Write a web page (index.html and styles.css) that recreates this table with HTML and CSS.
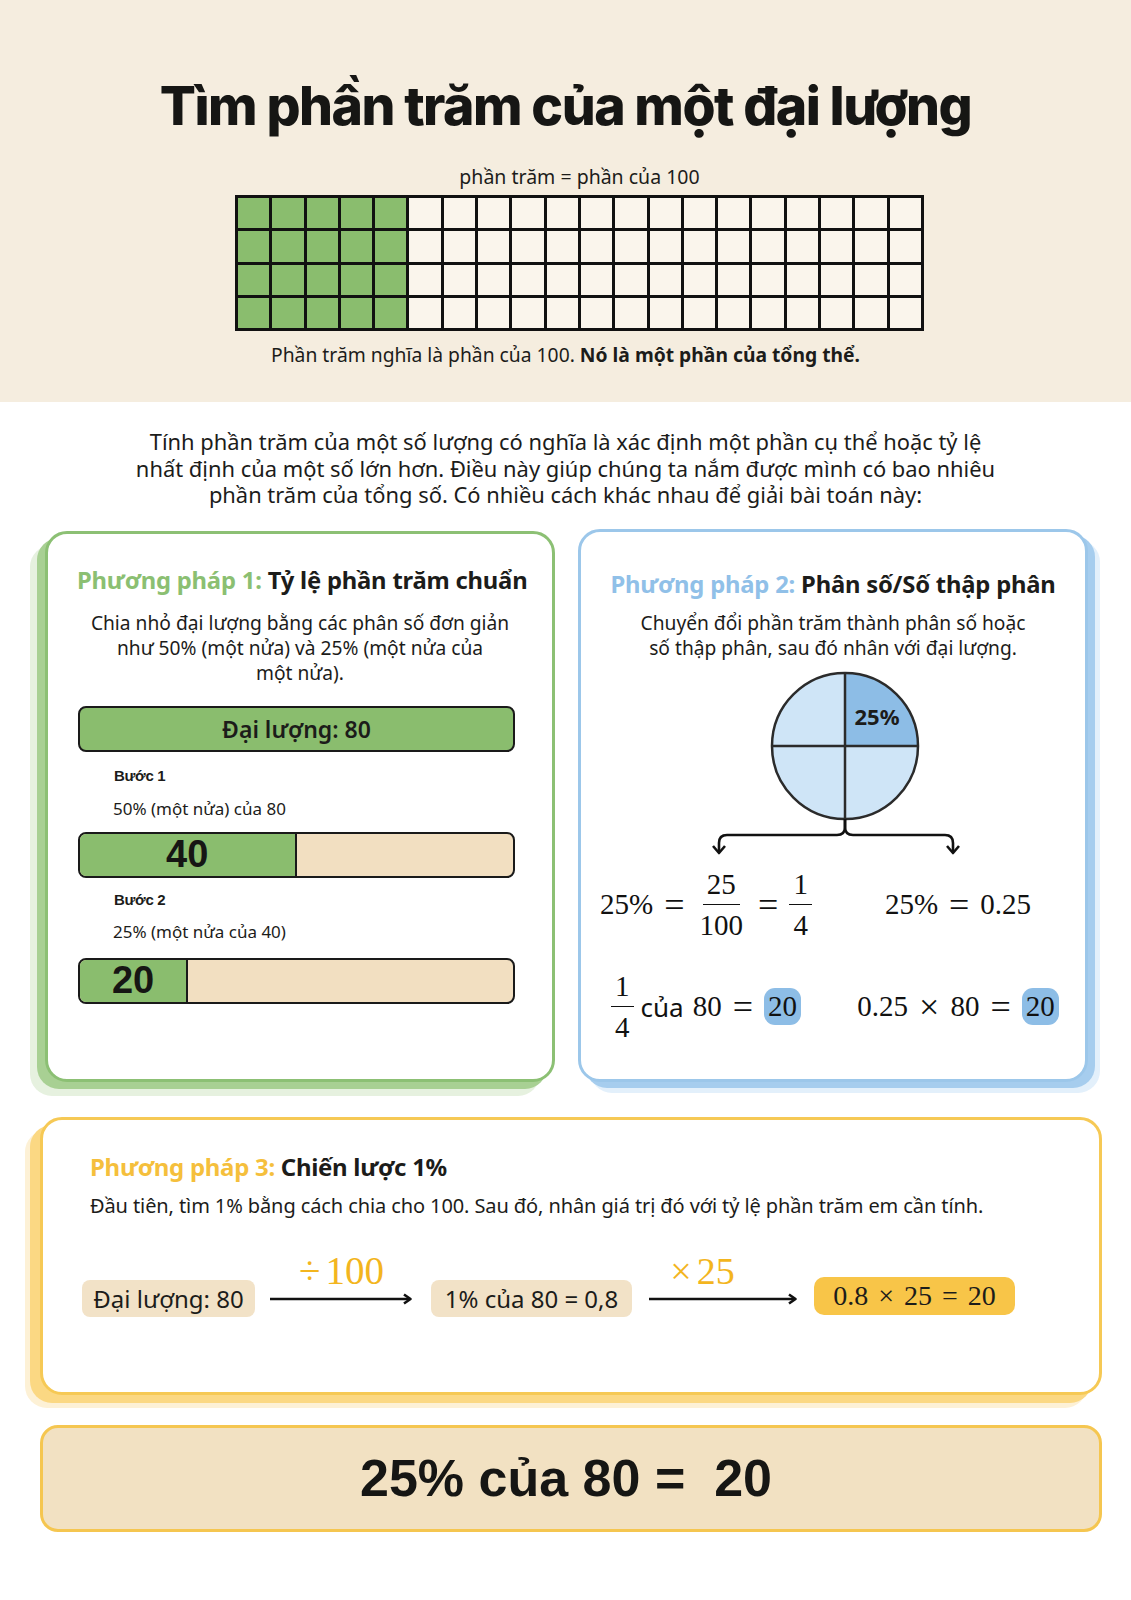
FILE: index.html
```html
<!DOCTYPE html>
<html lang="vi">
<head>
<meta charset="utf-8">
<title>Tìm phần trăm của một đại lượng</title>
<link rel="stylesheet" href="styles.css">
</head>
<body>
<header class="hero">
  <h1 class="title">Tìm phần trăm của một đại lượng</h1>
  <p class="hero-sub">phần trăm = phần của 100</p>
  <div class="grid100">
    <div class="cell on"></div><div class="cell on"></div><div class="cell on"></div><div class="cell on"></div><div class="cell on"></div>
    <div class="cell"></div><div class="cell"></div><div class="cell"></div><div class="cell"></div><div class="cell"></div><div class="cell"></div><div class="cell"></div><div class="cell"></div><div class="cell"></div><div class="cell"></div><div class="cell"></div><div class="cell"></div><div class="cell"></div><div class="cell"></div><div class="cell"></div>
    <div class="cell on"></div><div class="cell on"></div><div class="cell on"></div><div class="cell on"></div><div class="cell on"></div>
    <div class="cell"></div><div class="cell"></div><div class="cell"></div><div class="cell"></div><div class="cell"></div><div class="cell"></div><div class="cell"></div><div class="cell"></div><div class="cell"></div><div class="cell"></div><div class="cell"></div><div class="cell"></div><div class="cell"></div><div class="cell"></div><div class="cell"></div>
    <div class="cell on"></div><div class="cell on"></div><div class="cell on"></div><div class="cell on"></div><div class="cell on"></div>
    <div class="cell"></div><div class="cell"></div><div class="cell"></div><div class="cell"></div><div class="cell"></div><div class="cell"></div><div class="cell"></div><div class="cell"></div><div class="cell"></div><div class="cell"></div><div class="cell"></div><div class="cell"></div><div class="cell"></div><div class="cell"></div><div class="cell"></div>
    <div class="cell on"></div><div class="cell on"></div><div class="cell on"></div><div class="cell on"></div><div class="cell on"></div>
    <div class="cell"></div><div class="cell"></div><div class="cell"></div><div class="cell"></div><div class="cell"></div><div class="cell"></div><div class="cell"></div><div class="cell"></div><div class="cell"></div><div class="cell"></div><div class="cell"></div><div class="cell"></div><div class="cell"></div><div class="cell"></div><div class="cell"></div>
  </div>
  <p class="hero-caption">Phần trăm nghĩa là phần của 100. <b>Nó là một phần của tổng thể.</b></p>
</header>

<main class="content">
  <p class="intro">Tính phần trăm của một số lượng có nghĩa là xác định một phần cụ thể hoặc tỷ lệ<br>nhất định của một số lớn hơn. Điều này giúp chúng ta nắm được mình có bao nhiêu<br>phần trăm của tổng số. Có nhiều cách khác nhau để giải bài toán này:</p>

  <div class="methods">
    <section class="card card-green">
      <h2 class="card-title"><span class="lead green">Phương pháp 1:</span> Tỷ lệ phần trăm chuẩn</h2>
      <p class="card-desc">Chia nhỏ đại lượng bằng các phân số đơn giản<br>như 50% (một nửa) và 25% (một nửa của<br>một nửa).</p>
      <div class="bar bar-full">Đại lượng: 80</div>
      <p class="step">Bước 1</p>
      <p class="step-text">50% (một nửa) của 80</p>
      <div class="bar bar-split">
        <div class="bar-fill" style="width: 50%">40</div>
      </div>
      <p class="step step-2">Bước 2</p>
      <p class="step-text">25% (một nửa của 40)</p>
      <div class="bar bar-split last">
        <div class="bar-fill" style="width: 25%">20</div>
      </div>
    </section>

    <section class="card card-blue">
      <h2 class="card-title"><span class="lead blue">Phương pháp 2:</span> Phân số/Số thập phân</h2>
      <p class="card-desc">Chuyển đổi phần trăm thành phân số hoặc<br>số thập phân, sau đó nhân với đại lượng.</p>
      <svg class="pie" width="504" height="190" viewBox="0 0 504 190">
        <circle cx="264" cy="76" r="73" fill="#cfe5f7"/>
        <path d="M264 76 V3 A73 73 0 0 1 337 76 Z" fill="#8dbde6"/>
        <circle cx="264" cy="76" r="73" fill="none" stroke="#2b2b2b" stroke-width="2.5"/>
        <line x1="264" y1="3" x2="264" y2="149" stroke="#2b2b2b" stroke-width="2.5"/>
        <line x1="191" y1="76" x2="337" y2="76" stroke="#2b2b2b" stroke-width="2.5"/>
        <text x="296" y="55" text-anchor="middle" class="pie-label">25%</text>
        <path d="M264 149 V157 Q264 165 256 165 H146 Q138 165 138 173 V182" fill="none" stroke="#111" stroke-width="2.6"/>
        <path d="M264 149 V157 Q264 165 272 165 H364 Q372 165 372 173 V182" fill="none" stroke="#111" stroke-width="2.6"/>
        <path d="M132 176 L138 183 L144 176" fill="none" stroke="#111" stroke-width="2.6" stroke-linejoin="round"/>
        <path d="M366 176 L372 183 L378 176" fill="none" stroke="#111" stroke-width="2.6" stroke-linejoin="round"/>
      </svg>
      <div class="math-grid">
        <div class="math">
          <span>25%</span><span class="op">=</span>
          <span class="frac"><span class="num">25</span><span class="den">100</span></span>
          <span class="op">=</span>
          <span class="frac"><span class="num">1</span><span class="den">4</span></span>
        </div>
        <div class="math"><span>25%</span><span class="op">=</span><span>0.25</span></div>
        <div class="math">
          <span class="frac"><span class="num">1</span><span class="den">4</span></span>
          <span class="word">của</span><span>80</span><span class="op">=</span><span class="hl">20</span>
        </div>
        <div class="math"><span>0.25</span><span class="op">×</span><span>80</span><span class="op">=</span><span class="hl">20</span></div>
      </div>
    </section>
  </div>

  <section class="card card-yellow">
    <h2 class="card-title small"><span class="lead yellow">Phương pháp 3:</span> Chiến lược 1%</h2>
    <p class="card-desc left">Đầu tiên, tìm 1% bằng cách chia cho 100. Sau đó, nhân giá trị đó với tỷ lệ phần trăm em cần tính.</p>
    <div class="flow">
      <span class="pill p1">Đại lượng: 80</span>
      <div class="step-arrow a1">
        <span class="arrow-label"><span class="sym">÷</span>100</span>
        <svg width="143" height="12" viewBox="0 0 143 12"><path d="M0 6 H140" stroke="#111" stroke-width="2.6"/><path d="M134 1.5 L140.5 6 L134 10.5" fill="none" stroke="#111" stroke-width="2.6" stroke-linejoin="round"/></svg>
      </div>
      <span class="pill p2">1% của 80 = 0,8</span>
      <div class="step-arrow a2">
        <span class="arrow-label"><span class="sym">×</span>25</span>
        <svg width="149" height="12" viewBox="0 0 149 12"><path d="M0 6 H146" stroke="#111" stroke-width="2.6"/><path d="M140 1.5 L146.5 6 L140 10.5" fill="none" stroke="#111" stroke-width="2.6" stroke-linejoin="round"/></svg>
      </div>
      <span class="pill pill-yellow">0.8<span class="op">×</span>25<span class="op">=</span>20</span>
    </div>
  </section>

  <div class="result">25% của 80 =&nbsp; 20</div>
</main>
</body>
</html>
```
FILE: styles.css
```css
* { box-sizing: border-box; }

html, body { margin: 0; padding: 0; }

body {
  width: 1131px;
  min-height: 1600px;
  background: #ffffff;
  color: #1c1c1a;
  font-family: "Noto Sans", "Open Sans", sans-serif;
}

p, h1, h2 { margin: 0; }

/* ---------- header ---------- */
.hero {
  height: 402px;
  background: #f5eddf;
  display: flex;
  flex-direction: column;
  align-items: center;
  padding-top: 78px;
}

.title {
  font-family: "Inter", "Liberation Sans", sans-serif;
  font-weight: 800;
  font-size: 53.5px;
  line-height: 55px;
  letter-spacing: -1.5px;
  color: #161614;
}

.hero-sub {
  margin-top: 32px;
  margin-left: 28px;
  font-size: 19.5px;
  line-height: 23px;
}

.grid100 {
  margin-top: 7px;
  margin-left: 28px;
  width: 689px;
  height: 136px;
  display: grid;
  grid-template-columns: repeat(20, 1fr);
  grid-template-rows: repeat(4, 1fr);
  gap: 3px;
  padding: 3px;
  background: #111;
}

.cell { background: #faf5ec; }
.cell.on { background: #8abd6e; }

.hero-caption {
  margin-top: 12px;
  font-size: 19.3px;
  line-height: 23px;
}
.hero-caption b { font-weight: 700; }

/* ---------- content ---------- */
.content {
  display: flex;
  flex-direction: column;
}

.intro {
  margin-top: 27px;
  text-align: center;
  font-size: 21.9px;
  line-height: 26.5px;
}

.methods {
  margin-top: 22px;
  display: flex;
  align-items: flex-start;
  gap: 23px;
  padding-left: 45px;
}

.card {
  position: relative;
  background: #fff;
  border: 3px solid;
  border-radius: 22px;
}

.card-green {
  width: 510px;
  height: 551px;
  border-color: #8cc074;
  box-shadow: -8px 7px 0 #a8d093, -15px 14px 0 #e6f1df;
  padding: 32px 29px 0 29px;
}

.card-blue {
  width: 510px;
  height: 553px;
  margin-top: -2px;
  border-color: #9cc7ea;
  box-shadow: 7px 6px 0 #a6cdee, 12px 11px 0 #e3f0fb;
  padding: 38px 0 0 0;
}

.card-yellow {
  margin: 35px 29px 0 40px;
  height: 278px;
  border-color: #f6c955;
  box-shadow: -10px 8px 0 #fbd883, -15px 13px 0 #fdf1d6;
  padding: 33px 40px 0 47px;
}

.card-title {
  font-size: 23.8px;
  line-height: 28px;
  font-weight: 700;
  text-align: center;
  white-space: nowrap;
  letter-spacing: -0.2px;
}
.card-title.small {
  text-align: left;
  font-size: 24px;
  letter-spacing: -0.3px;
}

.lead.green { color: #8bbf72; }
.lead.blue { color: #90c0e8; }
.lead.yellow { color: #f5bf3c; }

.card-desc {
  margin-top: 16px;
  text-align: center;
  font-size: 19.2px;
  line-height: 25px;
}
.card-blue .card-desc { margin-top: 12px; }
.card-desc.left {
  text-align: left;
  margin-top: 13px;
  font-size: 20px;
  line-height: 24px;
  letter-spacing: -0.1px;
  white-space: nowrap;
}

/* bars */
.bar {
  height: 46px;
  margin-left: 1px;
  margin-right: 8px;
  border: 2px solid #1a1a1a;
  border-radius: 8px;
  overflow: hidden;
}

.bar-full {
  margin-top: 21px;
  background: #8abd6e;
  display: flex;
  align-items: center;
  justify-content: center;
  font-weight: 600;
  font-size: 23px;
}

.bar-split {
  margin-top: 13px;
  background: #f2dfc1;
  display: flex;
}
.bar-split.last { margin-top: 16px; }

.bar-fill {
  height: 100%;
  background: #8abd6e;
  border-right: 2px solid #1a1a1a;
  display: flex;
  align-items: center;
  justify-content: center;
  font-family: "Liberation Sans", "Arial", sans-serif;
  font-weight: 700;
  font-size: 38px;
  color: #161614;
}

.step {
  margin-top: 14px;
  margin-left: 37px;
  font-family: "Liberation Sans", sans-serif;
  font-weight: 700;
  font-size: 15px;
  line-height: 20px;
  letter-spacing: -0.3px;
}
.step.step-2 { margin-top: 12px; }

.step-text {
  margin-top: 13px;
  margin-left: 36px;
  font-size: 17px;
  line-height: 20px;
}
.step-2 + .step-text { margin-top: 12px; }

/* pie */
.pie {
  display: block;
  margin-top: 10px;
}

.pie-label {
  font-family: "Noto Sans", sans-serif;
  font-weight: 700;
  font-size: 22px;
  fill: #1c1c1a;
}

/* math */
.math-grid {
  margin-top: 6px;
  display: grid;
  grid-template-columns: 250px 254px;
  grid-template-rows: 78px 78px;
  row-gap: 24px;
}

.math {
  display: flex;
  align-items: center;
  justify-content: center;
  font-family: "Liberation Serif", "DejaVu Serif", serif;
  font-size: 29px;
  color: #111;
}

.math .op { margin: 0 11px; font-size: 36px; line-height: 34px; }

.frac {
  display: inline-flex;
  flex-direction: column;
  align-items: center;
  line-height: 34px;
}
.frac .num {
  padding: 0 4px 3px;
  border-bottom: 1.6px solid #111;
}
.frac .den { padding: 3px 4px 0; }
.frac .num, .frac .den { min-width: 22px; text-align: center; }
.math:first-child .frac:nth-of-type(1) .num { padding: 0 7px 3px; }

.math .word {
  font-family: "Noto Sans", sans-serif;
  font-size: 26px;
  margin: 0 9px 0 7px;
}

.hl {
  background: #8dbde6;
  border-radius: 11px;
  padding: 2px 4px;
  line-height: 33px;
}

/* flow */
.flow {
  margin-top: 31px;
  display: flex;
  align-items: center;
  margin-left: -8px;
}

.pill {
  background: #f2e2c7;
  border-radius: 8px;
  height: 37px;
  display: flex;
  align-items: center;
  justify-content: center;
  font-size: 24px;
  white-space: nowrap;
}
.pill.p1 { width: 173px; }
.pill.p2 { width: 201px; }

.pill-yellow {
  background: #f8c548;
  width: 201px;
  margin-top: -6px;
  font-family: "Liberation Serif", serif;
  font-size: 28px;
  border-radius: 10px;
  height: 38px;
}
.pill-yellow .op { margin: 0 10px; }

.step-arrow {
  display: flex;
  flex-direction: column;
  align-items: center;
  padding-bottom: 44px;
}
.step-arrow svg { display: block; }
.step-arrow.a1 { margin: 0 18px 0 15px; }
.step-arrow.a2 { margin: 0 16px 0 17px; }

.arrow-label {
  font-family: "Liberation Serif", serif;
  font-size: 39px;
  line-height: 44px;
  color: #f3b51e;
}
.arrow-label .sym { margin-right: 5px; }
.a2 .arrow-label { margin-right: 42px; font-size: 38px; }

/* result */
.result {
  margin: 30px 29px 0 40px;
  height: 107px;
  background: #f2e1c2;
  border: 3px solid #f5c650;
  border-radius: 18px;
  display: flex;
  align-items: center;
  justify-content: center;
  font-family: "Liberation Sans", "Arial", sans-serif;
  font-weight: 700;
  font-size: 52px;
  color: #161614;
  padding-right: 10px;
}
```
